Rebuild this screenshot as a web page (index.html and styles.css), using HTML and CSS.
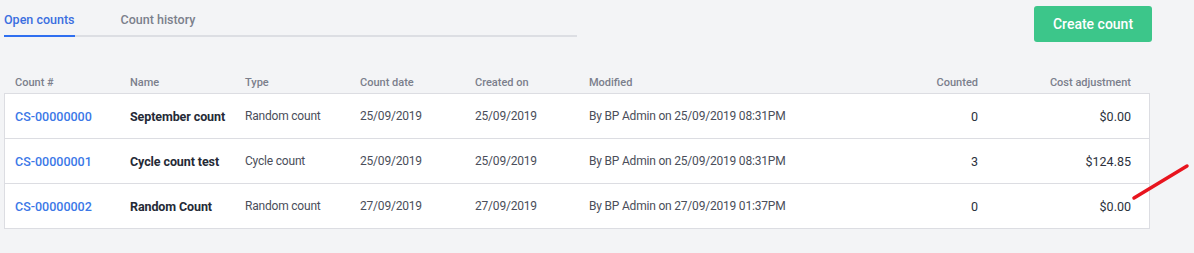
FILE: index.html
```html
<!DOCTYPE html>
<html lang="en">
<head>
    <meta charset="UTF-8">
    <title>Stock counts</title>
    <link rel="stylesheet" href="styles.css">
</head>
<body>
    <div class="page">
        <div class="toolbar">
            <div class="tabs">
                <div class="tab active">Open counts</div>
                <div class="tab">Count history</div>
            </div>
            <button class="create-button">Create count</button>
        </div>

        <div class="counts">
            <div class="counts-row head">
                <div>Count #</div>
                <div>Name</div>
                <div>Type</div>
                <div>Count date</div>
                <div>Created on</div>
                <div>Modified</div>
                <div class="num">Counted</div>
                <div class="num">Cost adjustment</div>
            </div>
            <div class="counts-body">
                <div class="counts-row">
                    <div class="code">CS-00000000</div>
                    <div class="name">September count</div>
                    <div>Random count</div>
                    <div>25/09/2019</div>
                    <div>25/09/2019</div>
                    <div>By BP Admin on 25/09/2019 08:31PM</div>
                    <div class="num strong">0</div>
                    <div class="num strong">$0.00</div>
                </div>
                <div class="counts-row">
                    <div class="code">CS-00000001</div>
                    <div class="name">Cycle count test</div>
                    <div>Cycle count</div>
                    <div>25/09/2019</div>
                    <div>25/09/2019</div>
                    <div>By BP Admin on 25/09/2019 08:31PM</div>
                    <div class="num strong">3</div>
                    <div class="num strong">$124.85</div>
                </div>
                <div class="counts-row">
                    <div class="code">CS-00000002</div>
                    <div class="name">Random Count</div>
                    <div>Random count</div>
                    <div>27/09/2019</div>
                    <div>27/09/2019</div>
                    <div>By BP Admin on 27/09/2019 01:37PM</div>
                    <div class="num strong">0</div>
                    <div class="num strong">$0.00</div>
                </div>
            </div>
        </div>
    </div>

    <!-- red annotation stroke -->
    <svg class="marker" width="60" height="40" viewBox="0 0 60 40">
        <line x1="3" y1="36" x2="56" y2="4" stroke="#e8141e" stroke-width="3.5" stroke-linecap="round"/>
    </svg>
</body>
</html>
```

FILE: styles.css
```css
* {
    margin: 0;
    padding: 0;
    box-sizing: border-box;
}

body {
    background-color: #f3f4f6;
    font-family: Roboto, "Liberation Sans", sans-serif;
    color: #4a4e5a;
    position: relative;
    min-height: 253px;
}

.page {
    width: 1152px;
    padding-left: 4px;
}

.toolbar {
    display: flex;
    justify-content: space-between;
    align-items: flex-start;
    height: 93px;
    padding-top: 6px;
}

.tabs {
    display: flex;
    width: 573px;
    border-bottom: 2px solid #dcdee3;
}

.tab {
    font-size: 12.5px;
    font-weight: 500;
    color: #7b808c;
    padding: 6px 0 8px;
    margin-bottom: -2px;
    border-bottom: 2px solid transparent;
    margin-right: 46px;
}

.tab.active {
    color: #3b6fe0;
    border-bottom-color: #2f6ff0;
}

.create-button {
    width: 118px;
    height: 36px;
    background-color: #3cc68a;
    color: #fff;
    border: none;
    border-radius: 3px;
    font-family: inherit;
    font-size: 14px;
    font-weight: 500;
    cursor: pointer;
}

.counts {
    width: 1146px;
    margin-top: -24px;
}

.counts-row {
    display: grid;
    grid-template-columns: 115px 115px 115px 115px 114px 1fr 120px 153px;
    align-items: center;
    padding: 0 18px 0 10px;
    height: 44px;
    font-size: 12px;
    letter-spacing: -0.2px;
    white-space: nowrap;
}

.counts-row.head {
    height: 24px;
    padding: 2px 19px 0 11px;
    font-size: 11px;
    letter-spacing: 0;
    font-weight: 500;
    color: #7b7f8c;
}

.counts-body {
    background-color: #fff;
    border: 1px solid #dcdde2;
}

.counts-body .counts-row + .counts-row {
    height: 45px;
    border-top: 1px solid #dcdde2;
}

.num {
    text-align: right;
}

.strong {
    color: #2c313d;
    font-size: 12.5px;
    letter-spacing: 0;
}

.code {
    color: #3b78e7;
    font-size: 12.5px;
    letter-spacing: 0;
    font-weight: 500;
}

.name {
    color: #252a36;
    font-size: 12.5px;
    letter-spacing: -0.1px;
    font-weight: 700;
}

.marker {
    position: absolute;
    left: 1131px;
    top: 162px;
}
```
